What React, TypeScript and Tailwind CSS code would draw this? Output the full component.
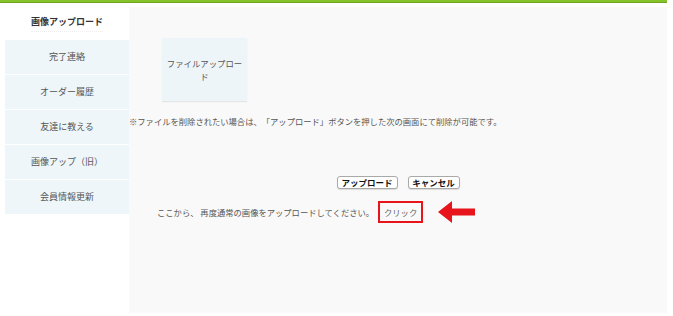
const menu = ["完了連絡", "オーダー履歴", "友達に教える", "画像アップ（旧）", "会員情報更新"];

export default function App() {
  return (
    <div
      className="w-[673px] h-[316px] bg-white text-[#555] overflow-hidden [text-spacing-trim:space-all]"
      style={{ fontFamily: '"Noto Sans CJK JP", "Noto Sans", sans-serif' }}
    >
      <div className="h-[3px] w-[667px] bg-[#86c22a] border-b border-[#6fa51d]" />
      <div className="flex mt-[4px] h-[306px]">
        {/* sidebar */}
        <div className="ml-[5px] w-[124px] flex flex-col">
          <div className="h-[33px] flex items-center justify-center bg-white text-[9px] font-bold text-[#333]">
            <span className="pb-[2px] border-b border-dotted border-[#eee]">画像アップロード</span>
          </div>
          {menu.map((label) => (
            <div
              key={label}
              className="h-[35px] flex items-center justify-center bg-[#eef6f9] border-b border-white text-[9px] text-[#555]"
            >
              {label}
            </div>
          ))}
        </div>

        {/* main */}
        <div className="w-[538px] bg-[#f9f9f9] flex flex-col">
          <div className="mt-[31px] ml-[33px] w-[85px] h-[63px] bg-[#edf5f9] shadow-[0_1px_1px_rgba(0,0,0,0.08)] flex items-center justify-center text-center px-[3px] text-[8.4px] leading-[13px] text-[#555]">
            ファイルアップロード
          </div>

          <p className="mt-[14px] text-[8.3px] leading-[12px] text-[#555] whitespace-nowrap">
            ※ファイルを削除されたい場合は、「アップロード」ボタンを押した次の画面にて
            <span className="text-[#7a5a3a]">削除</span>が可能です。
          </p>

          <div className="mt-[49px] flex justify-center gap-[10px]">
            <button className="h-[13px] w-[61px] flex items-center justify-center bg-white border border-[#a9a9a9] rounded-[3px] shadow-[0_1px_1px_rgba(0,0,0,0.12)] text-[8.5px] font-semibold text-[#111] leading-none">
              アップロード
            </button>
            <button className="h-[13px] w-[52px] flex items-center justify-center bg-white border border-[#a9a9a9] rounded-[3px] shadow-[0_1px_1px_rgba(0,0,0,0.12)] text-[8.5px] font-semibold text-[#111] leading-none">
              キャンセル
            </button>
          </div>

          <div className="mt-[12px] pl-[28px] flex items-center">
            <span className="text-[8.3px] text-[#555] whitespace-pre">
              ここから、 再度通常の画像をアップロードしてください。
            </span>
            <span className="ml-[4px] w-[45px] h-[22px] border-2 border-[#e8141b] flex items-center justify-center text-[8.3px] text-[#666]">
              クリック
            </span>
            <svg className="ml-[15px]" width="37" height="22" viewBox="0 0 37 22">
              <polygon points="0,11 14,0 14,7.5 37,7.5 37,14.5 14,14.5 14,22" fill="#e8141b" />
            </svg>
          </div>
        </div>
      </div>
    </div>
  );
}
